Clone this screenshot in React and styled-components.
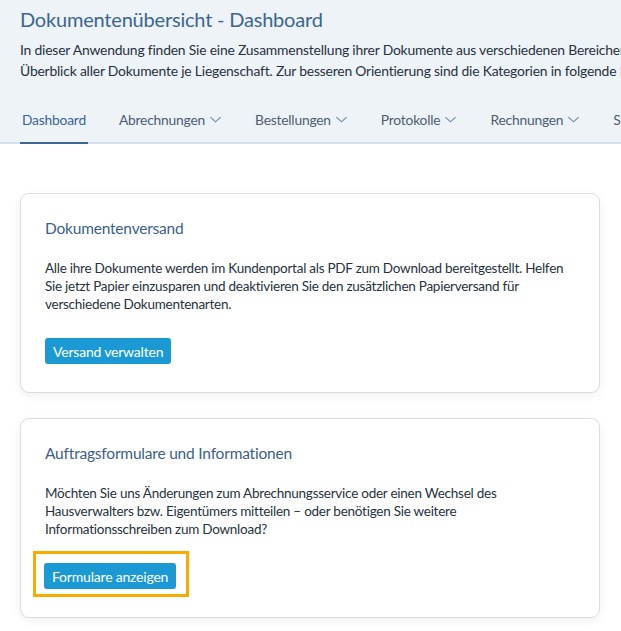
import styled, { createGlobalStyle } from "styled-components";

const GlobalStyle = createGlobalStyle`
  body {
    margin: 0;
    background: #ffffff;
    font-family: "Lato", "Liberation Sans", sans-serif;
    color: #2c3a48;
  }
`;

const Page = styled.div`
  width: 621px;
  overflow: hidden;
`;

const Header = styled.header`
  background-color: #eef3f8;
  border-bottom: 2px solid #d3e0ee;
  padding: 0 20px;
`;

const Title = styled.h1`
  margin: 0;
  padding-top: 6px;
  font-size: 20px;
  font-weight: 400;
  line-height: 26px;
  color: #3b6592;
  letter-spacing: -0.2px;
`;

const Intro = styled.p`
  margin: 7px 0 0;
  font-size: 13.9px;
  line-height: 21px;
  color: #26323e;
  white-space: nowrap;
  letter-spacing: -0.2px;
`;

const Tabs = styled.nav`
  display: flex;
  gap: 29px;
  margin-top: 16px;
`;

const Tab = styled.div`
  display: flex;
  align-items: center;
  gap: 4px;
  height: 47px;
  margin-bottom: -2px;
  padding: 0 2px;
  font-size: 13.8px;
  letter-spacing: -0.2px;
  white-space: nowrap;
  color: ${(p) => (p.$active ? "#3b6592" : "#4c5d70")};
  border-bottom: 2px solid ${(p) => (p.$active ? "#3b6592" : "transparent")};
  box-sizing: border-box;
  svg {
    width: 13px;
    height: 13px;
    color: #6a86a6;
  }
`;

const Content = styled.main`
  display: flex;
  flex-direction: column;
  gap: 25px;
  padding: 49px 21px 20px 20px;
`;

const Card = styled.section`
  border: 1px solid #dcdcdc;
  border-radius: 9px;
  background: #fff;
  box-shadow: 0 3px 10px rgba(0, 0, 0, 0.06);
  padding: 23px 24px 27px;
  height: 200px;
  box-sizing: border-box;
`;

const CardTitle = styled.h2`
  margin: 0;
  font-size: 15.5px;
  font-weight: 400;
  line-height: 22px;
  color: #3b5f86;
  letter-spacing: -0.2px;
`;

const CardText = styled.p`
  margin: 20px 0 0;
  font-size: 13.5px;
  line-height: 18px;
  color: #26323e;
  letter-spacing: -0.25px;
`;

const ButtonWrap = styled.div`
  display: inline-block;
  margin-top: ${(p) => (p.$highlight ? "13px" : "25px")};
  margin-left: ${(p) => (p.$highlight ? "-12px" : "0")};
  padding: ${(p) => (p.$highlight ? "9px 10px 5px 8px" : "0")};
  border: ${(p) => (p.$highlight ? "3px solid #f8ac00" : "none")};
`;

const Button = styled.button`
  display: block;
  height: 26px;
  padding: 0 8px;
  border: none;
  border-radius: 3px;
  background-color: #1b99d5;
  color: #fff;
  font-family: inherit;
  font-size: 14px;
  letter-spacing: -0.2px;
  cursor: pointer;
`;

const Chevron = () => (
  <svg viewBox="0 0 14 14" fill="none" stroke="currentColor" strokeWidth="1.1">
    <path d="M1.5 4.5 L7 9.5 L12.5 4.5" />
  </svg>
);

const tabs = [
  { label: "Dashboard", active: true },
  { label: "Abrechnungen", menu: true },
  { label: "Bestellungen", menu: true },
  { label: "Protokolle", menu: true },
  { label: "Rechnungen", menu: true },
  { label: "Service", menu: true },
];

export default function App() {
  return (
    <Page>
      <GlobalStyle />
      <Header>
        <Title>Dokumentenübersicht - Dashboard</Title>
        <Intro>
          In dieser Anwendung finden Sie eine Zusammenstellung ihrer Dokumente aus verschiedenen Bereichen. Hier erhalten Sie einen
          <br />
          Überblick aller Dokumente je Liegenschaft. Zur besseren Orientierung sind die Kategorien in folgende Menüpunkte unterteilt.
        </Intro>
        <Tabs>
          {tabs.map((t) => (
            <Tab key={t.label} $active={t.active}>
              {t.label}
              {t.menu && <Chevron />}
            </Tab>
          ))}
        </Tabs>
      </Header>
      <Content>
        <Card>
          <CardTitle>Dokumentenversand</CardTitle>
          <CardText>
            Alle ihre Dokumente werden im Kundenportal als PDF zum Download bereitgestellt. Helfen Sie jetzt Papier
            einzusparen und deaktivieren Sie den zusätzlichen Papierversand für verschiedene Dokumentenarten.
          </CardText>
          <ButtonWrap>
            <Button>Versand verwalten</Button>
          </ButtonWrap>
        </Card>
        <Card>
          <CardTitle>Auftragsformulare und Informationen</CardTitle>
          <CardText>
            Möchten Sie uns Änderungen zum Abrechnungsservice oder einen Wechsel des Hausverwalters bzw. Eigentümers
            mitteilen – oder benötigen Sie weitere Informationsschreiben zum Download?
          </CardText>
          <ButtonWrap $highlight>
            <Button>Formulare anzeigen</Button>
          </ButtonWrap>
        </Card>
      </Content>
    </Page>
  );
}
